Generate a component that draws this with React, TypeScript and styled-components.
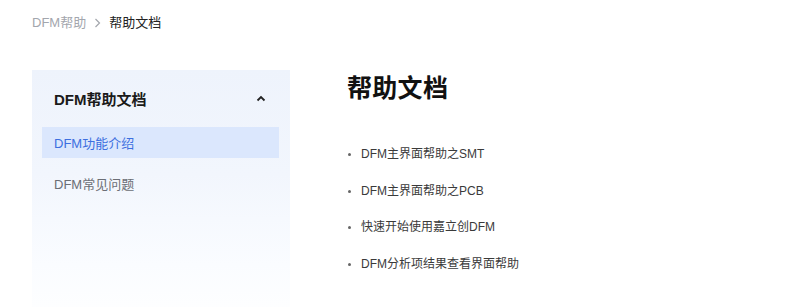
import React from "react";
import styled, { createGlobalStyle } from "styled-components";

const Global = createGlobalStyle`
  html, body { margin: 0; padding: 0; background: #fff; }
  body { font-family: "Liberation Sans", Arial, "Noto Sans CJK SC", sans-serif; }
  * { box-sizing: border-box; }
`;

const Page = styled.div`
  padding: 14px 0 0 32px;
  width: 788px;
  height: 307px;
  overflow: hidden;
`;

const Crumbs = styled.nav`
  display: flex;
  align-items: center;
  gap: 8px;
  height: 18px;
  font-size: 13px;
  line-height: 18px;
`;

const Crumb = styled.span<{ $current?: boolean }>`
  color: ${(p) => (p.$current ? "#222" : "#a3a6ad")};
`;

const Sep = styled.svg`
  width: 7px;
  height: 10px;
`;

const Main = styled.div`
  display: flex;
  margin-top: 38px;
  gap: 57px;
`;

const Sidebar = styled.aside`
  width: 258px;
  height: 260px;
  padding: 0 11px 0 10px;
  background: linear-gradient(180deg, #eef3fc 0%, #f2f6fd 40%, #fafcff 75%, #ffffff 100%);
  display: flex;
  flex-direction: column;
  gap: 10px;
`;

const SideHeader = styled.div`
  height: 57px;
  padding: 0 13px 0 12px;
  display: flex;
  align-items: center;
  justify-content: space-between;
  font-size: 15px;
  font-weight: 700;
  color: #1a1a1a;
  margin-bottom: -10px;
`;

const Item = styled.div<{ $active?: boolean }>`
  height: 31px;
  padding-left: 12px;
  display: flex;
  align-items: center;
  font-size: 13px;
  color: ${(p) => (p.$active ? "#3d6fe0" : "#6b6e75")};
  background: ${(p) => (p.$active ? "#dbe7fd" : "transparent")};
`;

const Content = styled.section`
  display: flex;
  flex-direction: column;
`;

const Title = styled.h1`
  margin: 0;
  font-size: 25px;
  line-height: 36px;
  font-weight: 700;
  color: #111;
  letter-spacing: 0.3px;
`;

const List = styled.ul`
  list-style: none;
  margin: 38px 0 0;
  padding: 0;
  display: flex;
  flex-direction: column;
  gap: 16.5px;
`;

const Li = styled.li`
  position: relative;
  padding-left: 14px;
  font-size: 12px;
  line-height: 20px;
  color: #3a3a3a;
  &::before {
    content: "";
    position: absolute;
    left: 1px;
    top: 9px;
    width: 3px;
    height: 3px;
    border-radius: 50%;
    background: #666;
  }
`;

const items = [
  "DFM主界面帮助之SMT",
  "DFM主界面帮助之PCB",
  "快速开始使用嘉立创DFM",
  "DFM分析项结果查看界面帮助",
];

export default function App() {
  return (
    <Page>
      <Global />
      <Crumbs>
        <Crumb>DFM帮助</Crumb>
        <Sep viewBox="0 0 7 10">
          <polyline points="1.5,1 5.5,5 1.5,9" fill="none" stroke="#a3a6ad" strokeWidth="1.2" />
        </Sep>
        <Crumb $current>帮助文档</Crumb>
      </Crumbs>
      <Main>
        <Sidebar>
          <SideHeader>
            <span>DFM帮助文档</span>
            <svg width="10" height="7" viewBox="0 0 10 7">
              <polyline points="1.5,5.5 5,2 8.5,5.5" fill="none" stroke="#222" strokeWidth="1.8" />
            </svg>
          </SideHeader>
          <Item $active>DFM功能介绍</Item>
          <Item>DFM常见问题</Item>
        </Sidebar>
        <Content>
          <Title>帮助文档</Title>
          <List>
            {items.map((t) => (
              <Li key={t}>{t}</Li>
            ))}
          </List>
        </Content>
      </Main>
    </Page>
  );
}
